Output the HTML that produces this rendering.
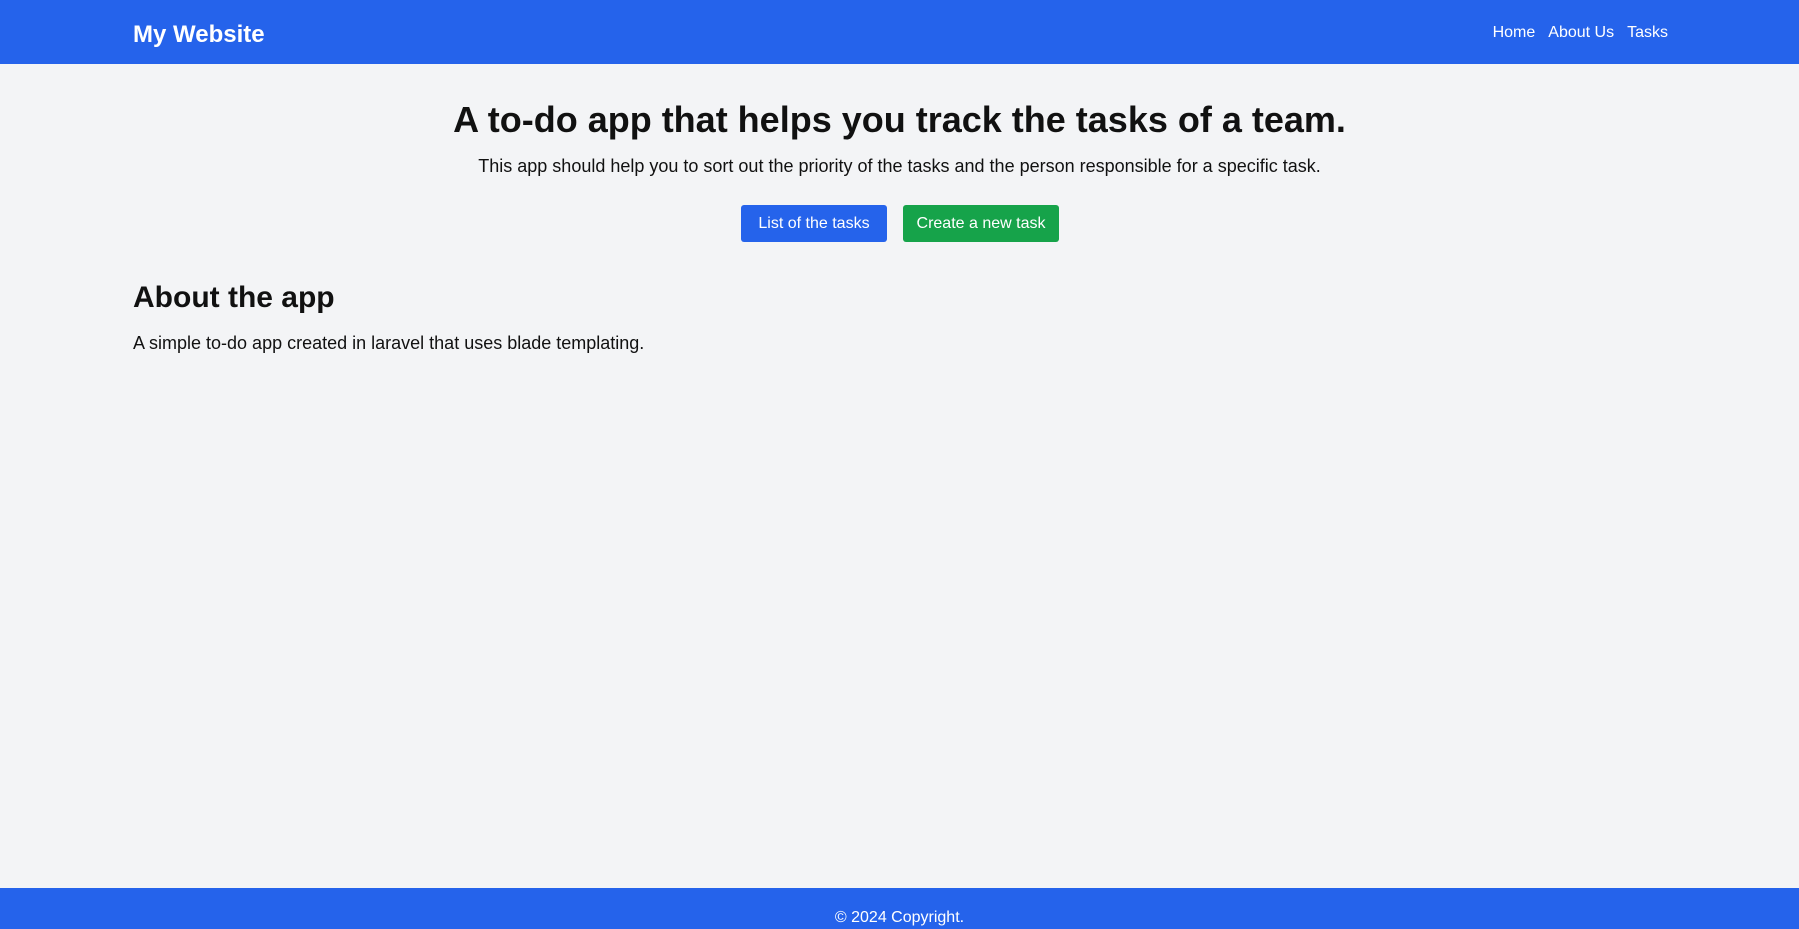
<!DOCTYPE html>
<html><head><meta charset="utf-8"><style>
*{margin:0;padding:0;box-sizing:border-box}
body{width:1799px;height:929px;background:#f3f4f6;font-family:"Liberation Sans",sans-serif;color:#111;position:relative;overflow:hidden}
header{height:64px;background:#2563eb;position:relative}
.logo{position:absolute;left:133px;top:21px;color:#fff;font-weight:bold;font-size:24px}
nav{position:absolute;right:131px;top:24px;color:#fff;font-size:16px}
nav span{margin-left:13px}
h1{position:absolute;left:0;width:100%;text-align:center;top:99px;font-size:36px;font-weight:bold}
.sub{position:absolute;left:0;width:100%;text-align:center;top:156px;font-size:18px}
.btn{position:absolute;top:205px;height:37px;color:#fff;font-size:16px;line-height:37px;text-align:center;border-radius:3px}
h2{position:absolute;left:133px;top:281px;font-size:30px;font-weight:bold}
.p{position:absolute;left:133px;top:333px;font-size:18px}
footer{position:absolute;left:0;top:888px;width:100%;height:41px;background:#2563eb;color:#fff;text-align:center;font-size:16px;padding-top:21px}
</style></head><body>
<header><div class="logo">My Website</div><nav><span>Home</span><span>About Us</span><span>Tasks</span></nav></header>
<h1>A to-do app that helps you track the tasks of a team.</h1>
<div class="sub">This app should help you to sort out the priority of the tasks and the person responsible for a specific task.</div>
<div class="btn" style="left:741px;width:146px;background:#2563eb">List of the tasks</div>
<div class="btn" style="left:903px;width:156px;background:#16a34a">Create a new task</div>
<h2>About the app</h2>
<div class="p">A simple to-do app created in laravel that uses blade templating.</div>
<footer>© 2024 Copyright.</footer>
</body></html>
